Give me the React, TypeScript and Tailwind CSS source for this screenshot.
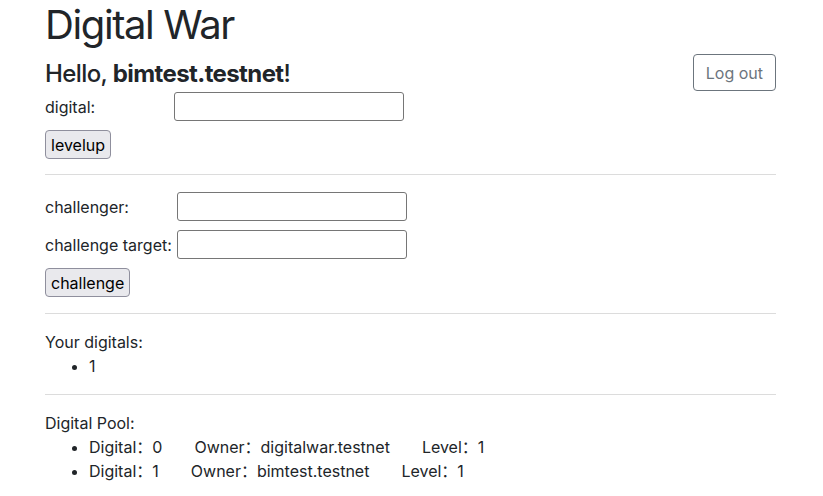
import React from "react";

const font = { fontFamily: '"Inter", "Noto Sans CJK SC", sans-serif' };

function Input() {
  return (
    <input
      type="text"
      className="w-[230px] h-[29px] border border-[#767676] rounded-[3px] bg-white px-1 text-[16px]"
    />
  );
}

function Btn({ children }: { children: React.ReactNode }) {
  return (
    <button className="h-[29px] px-[5px] bg-[#e9e9ed] border border-[#8f8f9d] rounded-[4px] text-[16px] leading-none text-black">
      {children}
    </button>
  );
}

export default function App() {
  return (
    <div className="bg-white w-[823px] h-[496px] overflow-hidden text-[#212529] text-[16px]" style={font}>
      <div className="pl-[45px] pr-[47px]">
        <h1 className="text-[40px] leading-[48px] font-normal mt-[1px] tracking-[-1.4px]">Digital War</h1>
        <div className="flex justify-between items-center mt-[5px]">
          <h4 className="text-[24px] leading-[29px] font-medium tracking-[-0.6px] mt-[2px]">
            Hello, <span className="font-bold">bimtest.testnet</span>!
          </h4>
          <button className="h-[37px] px-[12px] border border-[#6c757d] rounded-[4px] text-[#6c757d] text-[16px] bg-white">
            Log out
          </button>
        </div>
        <div className="flex items-center mt-[1px]">
          <label className="w-[129px]">digital:</label>
          <Input />
        </div>
        <div className="mt-[9px]">
          <Btn>levelup</Btn>
        </div>
        <hr className="mt-[15px] border-t border-[#dcdcdc]" />
        <div className="flex items-center mt-[17px]">
          <label className="w-[132px]">challenger:</label>
          <Input />
        </div>
        <div className="flex items-center mt-[9px]">
          <label className="w-[132px]">challenge target:</label>
          <Input />
        </div>
        <div className="mt-[9px]">
          <Btn>challenge</Btn>
        </div>
        <hr className="mt-[16px] border-t border-[#dcdcdc]" />
        <div className="mt-[16px] leading-[24px]">Your digitals:</div>
        <ul className="list-disc pl-[44px] leading-[24px]">
          <li>1</li>
        </ul>
        <hr className="mt-[16px] border-t border-[#dcdcdc]" />
        <div className="mt-[16px] leading-[24px]">Digital Pool:</div>
        <ul className="list-disc pl-[44px] leading-[24px]">
          <li>
            Digital：0<span className="ml-[32px]">Owner：digitalwar.testnet</span>
            <span className="ml-[32px]">Level：1</span>
          </li>
          <li>
            Digital：1<span className="ml-[32px]">Owner：bimtest.testnet</span>
            <span className="ml-[32px]">Level：1</span>
          </li>
        </ul>
      </div>
    </div>
  );
}
